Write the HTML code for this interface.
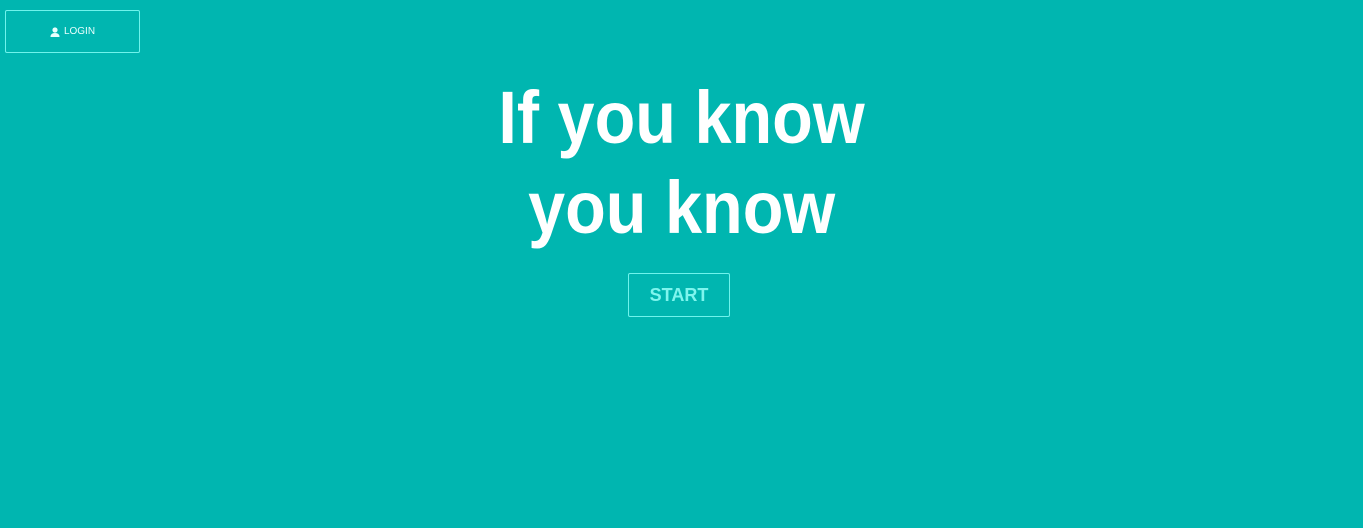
<!DOCTYPE html>
<html><head><meta charset="utf-8"><style>
html,body{margin:0;padding:0;width:1363px;height:528px;background:#00b6b0;overflow:hidden;font-family:"Liberation Sans",sans-serif;}
.login{position:absolute;left:5px;top:10px;width:133px;height:41px;border:1px solid #6ff3ec;border-radius:2px;color:#e8fffd;font-size:10px;display:flex;align-items:center;justify-content:center;gap:4px;box-sizing:content-box}
.h{position:absolute;left:0;width:1363px;text-align:center;color:#fff;font-weight:bold;font-size:74px;line-height:1;}
.h span{display:inline-block;transform:scaleX(0.9);}
.start{position:absolute;left:628px;top:273px;width:100px;height:42px;border:1px solid #6ff3ec;border-radius:2px;color:#7ff5ee;font-weight:bold;font-size:18px;display:flex;align-items:center;justify-content:center}
</style></head><body>
<div class="login"><svg width="10" height="10" viewBox="0 0 10 10"><circle cx="5" cy="3" r="2.6" fill="#e8fffd"/><path d="M0.5 10 Q0.5 6 5 6 Q9.5 6 9.5 10Z" fill="#e8fffd"/></svg>LOGIN</div>
<div class="h" style="top:81px"><span>If you know</span></div>
<div class="h" style="top:171px"><span>you know</span></div>
<div class="start">START</div>
</body></html>
